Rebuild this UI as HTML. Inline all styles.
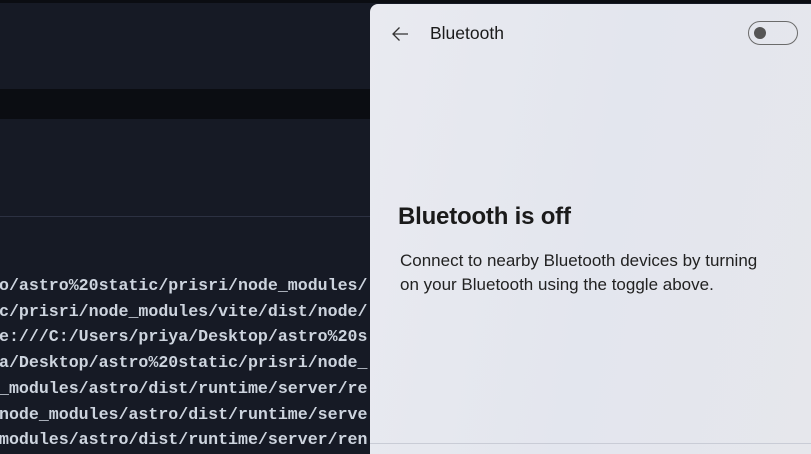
<!DOCTYPE html>
<html><head><style>
html,body{margin:0;padding:0;}
body{width:811px;height:448px;overflow:hidden;background:#161a25;position:relative;font-family:"Liberation Sans",sans-serif;}
.top{position:absolute;left:0;top:0;width:811px;height:3px;background:#0b0d12;}
.band{position:absolute;left:0;top:89px;width:370px;height:30px;background:#0b0d12;}
.hr{position:absolute;left:0;top:216px;width:370px;height:1px;background:#2c3142;}
.code{position:absolute;left:-1px;top:273px;font-family:"Liberation Mono",monospace;font-size:16.6px;line-height:25.7px;color:#cdd4de;white-space:pre;font-weight:bold;}
.panel{position:absolute;left:370px;top:4px;width:460px;height:450px;border-radius:8px 0 0 0;background:linear-gradient(100deg,#e9eaf0 0%,#e3e6ee 50%,#e6e7ec 100%);}
.line{position:absolute;left:370px;top:443px;width:441px;height:1px;background:#c9ccd6;}
.bt{position:absolute;left:430px;top:23px;font-size:17.5px;color:#1b1b1b;}
.h{position:absolute;left:398px;top:203px;font-size:24px;font-weight:bold;color:#1a1a1a;letter-spacing:-0.2px;}
.p{position:absolute;left:400px;top:249px;font-size:17px;line-height:24px;color:#222;}
.tog{position:absolute;left:748px;top:21px;width:50px;height:24px;border:1px solid #6b6b6b;border-radius:12px;box-sizing:border-box;}
.tog:after{content:"";position:absolute;left:5px;top:5px;width:12px;height:12px;border-radius:50%;background:#555;}
</style></head><body>
<div class="top"></div>
<div class="band"></div>
<div class="hr"></div>
<div class="code">o/astro%20static/prisri/node_modules/
c/prisri/node_modules/vite/dist/node/
e:///C:/Users/priya/Desktop/astro%20s
a/Desktop/astro%20static/prisri/node_
_modules/astro/dist/runtime/server/re
node_modules/astro/dist/runtime/serve
modules/astro/dist/runtime/server/ren</div>
<div class="panel"></div>
<div class="line"></div>
<svg style="position:absolute;left:391px;top:26px" width="18" height="16" viewBox="0 0 18 16"><path d="M17 8H2M8.5 1.5L2 8l6.5 6.5" fill="none" stroke="#333" stroke-width="1.3"/></svg>
<div class="bt">Bluetooth</div>
<div class="tog"></div>
<div class="h">Bluetooth is off</div>
<div class="p">Connect to nearby Bluetooth devices by turning<br>on your Bluetooth using the toggle above.</div>
</body></html>
